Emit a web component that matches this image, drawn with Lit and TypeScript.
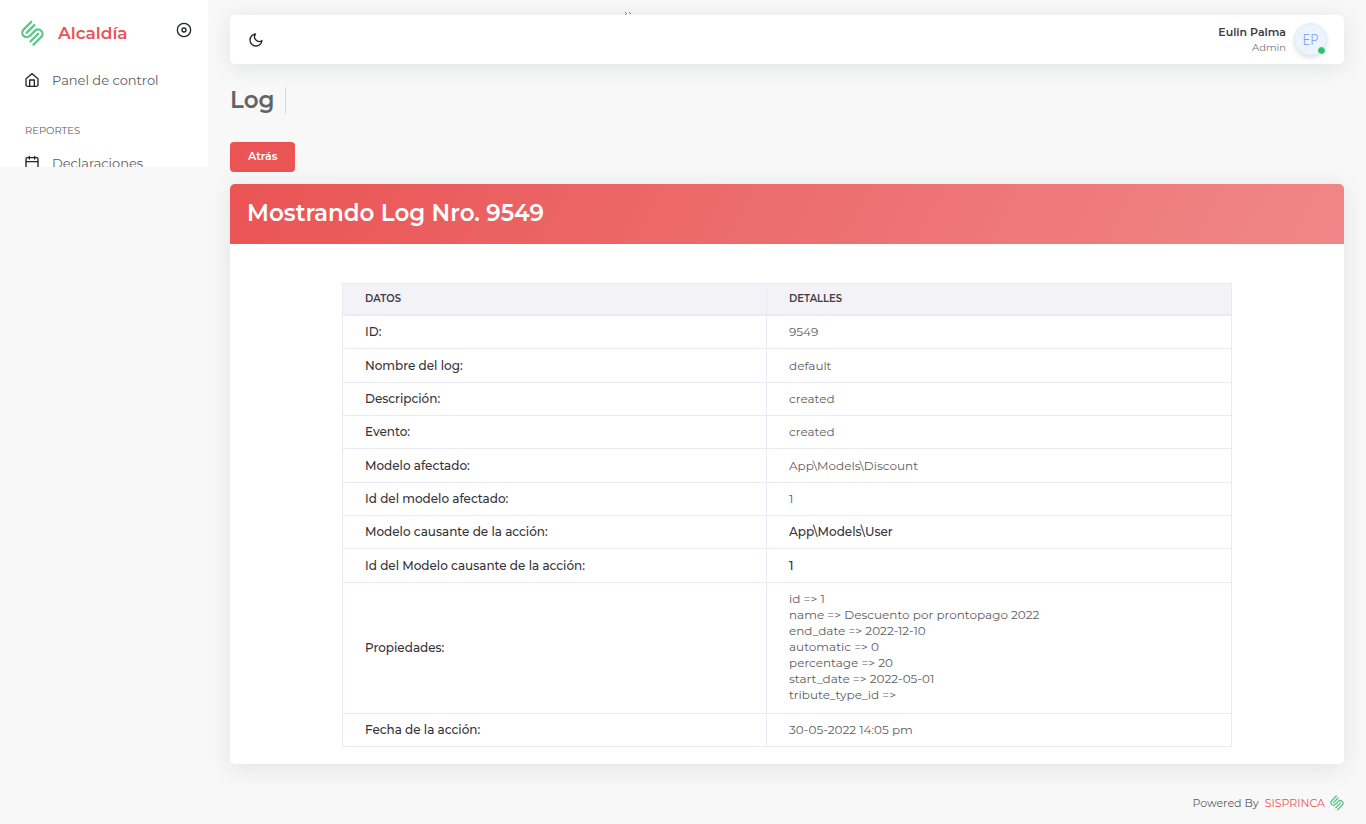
import { LitElement, html, css, svg } from "lit";
import { customElement } from "lit/decorators.js";

const logo = html`<svg class="logo" viewBox="0 0 24 28" fill="none" stroke="#62c48c" stroke-width="2.4" stroke-linecap="round" stroke-linejoin="round" aria-hidden="true">
  <path d="M10.8 1.9 2.650 10.050a4.600 4.600 0 0 0 6.500 6.500L14.650 11.050a4.600 4.600 0 0 1 6.500 6.500L13 25.700"/>
  <path d="M13.900 5.300 5.900 13.300"/>
  <path d="M17.900 14.300 9.900 22.300"/>
</svg>`;

const icon = (shape: unknown) => html`<svg class="icon" viewBox="0 0 24 24" fill="none" stroke="currentColor" stroke-width="2" stroke-linecap="round" stroke-linejoin="round" aria-hidden="true">${shape}</svg>`;

const home = svg`<path d="M3 10 12 2.500l9 7.500V19a2.500 2.500 0 0 1-2.500 2.500h-13A2.500 2.500 0 0 1 3 19z"/><path d="M8.500 21.500V12h7v9.500"/>`;
const calendar = svg`<rect x="3" y="4" width="18" height="18" rx="2"/><path d="M16 2v4M8 2v4M3 10h18"/>`;
const disc = svg`<circle cx="12" cy="12" r="10"/><circle cx="12" cy="12" r="3"/>`;
const moon = svg`<path d="M21 12.790A9 9 0 1 1 11.210 3 7 7 0 0 0 21 12.790z"/>`;

interface Row {
  label: string;
  lines: string[];
  strong?: boolean;
}

const rows: Row[] = [
  { label: "ID:", lines: ["9549"] },
  { label: "Nombre del log:", lines: ["default"] },
  { label: "Descripción:", lines: ["created"] },
  { label: "Evento:", lines: ["created"] },
  { label: "Modelo afectado:", lines: ["App\\Models\\Discount"] },
  { label: "Id del modelo afectado:", lines: ["1"] },
  { label: "Modelo causante de la acción:", lines: ["App\\Models\\User"], strong: true },
  { label: "Id del Modelo causante de la acción:", lines: ["1"], strong: true },
  {
    label: "Propiedades:",
    lines: [
      "id => 1",
      "name => Descuento por prontopago 2022",
      "end_date => 2022-12-10",
      "automatic => 0",
      "percentage => 20",
      "start_date => 2022-05-01",
      "tribute_type_id =>",
    ],
  },
  { label: "Fecha de la acción:", lines: ["30-05-2022 14:05 pm"] },
];

@customElement("app-root")
export class AppRoot extends LitElement {
  static styles = css`
    :host {
      display: flex;
      align-items: flex-start;
      min-height: 100vh;
      background: #f8f8f8;
      color: #5e5c62;
      font-family: Montserrat, Inter, sans-serif;
      font-size: 12px;
      line-height: 16px;
    }
    * { box-sizing: border-box; }
    a { color: inherit; text-decoration: none; }
    button { font: inherit; color: inherit; border: 0; background: none; padding: 0; cursor: pointer; }
    svg { display: block; flex: none; }
    .icon { width: 16px; height: 16px; color: #22252b; }
    .sidebar {
      flex: none;
      width: 208px;
      height: 167px;
      overflow: hidden;
      background: #fff;
    }
    .brand-row { display: flex; align-items: flex-start; padding: 20px 16px 0 20px; }
    .brand { display: flex; align-items: center; gap: 13px; flex: 1; color: #ea5455; font-size: 17px; line-height: 27px; font-weight: 600; }
    .logo { width: 25px; height: 27px; }
    .pin { padding-top: 2px; }
    .nav { display: flex; flex-direction: column; padding: 20px 24px 0; }
    .nav-link { display: flex; align-items: center; gap: 12px; height: 26px; font-size: 13px; }
    .section { margin: 0; padding: 31px 1px 12px; font-size: 10px; line-height: 14px; font-weight: 400; text-transform: uppercase; }
    .page { flex: 1; min-width: 0; min-height: 100vh; display: flex; flex-direction: column; padding: 15px 22px 0; }
    .topbar {
      position: relative;
      display: flex;
      align-items: center;
      justify-content: space-between;
      height: 49px;
      padding: 0 17px 0 18px;
      border-radius: 5px;
      background: #fff;
      box-shadow: 0 4px 22px rgba(34, 41, 47, 0.1);
    }
    .marks { position: absolute; top: -3px; left: 395px; width: 8px; height: 4px; }
    .user { display: flex; align-items: center; gap: 8px; text-align: right; color: #3f3c44; }
    .name { display: block; font-size: 11px; font-weight: 600; }
    .role { display: block; font-size: 10px; color: #77757f; }
    .avatar {
      position: relative;
      display: grid;
      place-items: center;
      width: 33px;
      height: 33px;
      border: 1px solid #e3ebf5;
      border-radius: 50%;
      background: #ebf4ff;
      color: #7f9cf5;
      font: 14px/16px "Noto Sans", sans-serif;
      font-weight: 300;
      box-shadow: 0 2px 4px rgba(34, 41, 47, 0.14);
    }
    .status { position: absolute; right: 0; bottom: 0; width: 9px; height: 9px; border: 1px solid #fff; border-radius: 50%; background: #28c76f; }
    .heading { display: flex; padding: 23px 0 28px; }
    .title { margin: 0; padding-right: 11px; border-right: 1px solid #d6dce1; color: #636363; font-size: 23px; line-height: 27px; font-weight: 600; }
    .back { align-self: flex-start; height: 30px; padding: 0 18px 2px; border-radius: 4px; background: #ea5455; color: #fff; font-size: 11px; font-weight: 600; }
    .card { margin-top: 12px; border-radius: 5px; overflow: hidden; background: #fff; box-shadow: 0 4px 24px rgba(34, 41, 47, 0.1); }
    .card-head { padding: 15px 17px 17px; background: linear-gradient(118deg, #ea5455, rgba(234, 84, 85, 0.7)); }
    .card-title { margin: 0; color: #fff; font-size: 23px; line-height: 28px; font-weight: 600; }
    .card-body { padding: 39px 112px 17px; }
    .data { width: 100%; border-collapse: collapse; table-layout: fixed; }
    .data th, .data td { padding: 8px 22px; border: 1px solid #ebe9f1; text-align: left; vertical-align: middle; }
    .data thead th { padding: 7px 22px 8px; border-bottom-width: 2px; background: #f3f2f7; color: #3f3c44; font-size: 10px; line-height: 15px; font-weight: 600; }
    .label-col { width: 424px; }
    .data tbody th, .data .strong { color: #35323a; font-weight: 500; }
    .data tbody tr:nth-child(3n + 2) { height: 34px; }
    .data .multi td { padding-bottom: 10px; }
    .line { display: block; }
    .footer { display: flex; align-items: center; justify-content: flex-end; gap: 6px; padding: 31px 0 12px; font-size: 11px; }
    .footer-link { display: flex; align-items: center; gap: 5px; color: #ea5455; }
    .footer .logo { width: 14px; height: 16px; }
  `;

  render() {
    return html`
      <aside class="sidebar">
        <div class="brand-row">
          <a class="brand" href="#">${logo}<span>Alcaldía</span></a>
          <button class="pin" aria-label="Fijar menú">${icon(disc)}</button>
        </div>
        <nav class="nav">
          <a class="nav-link" href="#">${icon(home)}<span>Panel de control</span></a>
          <h2 class="section">Reportes</h2>
          <a class="nav-link" href="#">${icon(calendar)}<span>Declaraciones</span></a>
        </nav>
      </aside>
      <main class="page">
        <header class="topbar">
          <svg class="marks" viewBox="0 0 8 4" aria-hidden="true">
            <path fill="#ea5455" d="M0 0h1v1H0zM1 1h1v1H1zM0 2h1v1H0zM4 0h1v1H4zM5 1h1v1H5z"/>
          </svg>
          <button aria-label="Modo oscuro">${icon(moon)}</button>
          <a class="user" href="#">
            <span><span class="name">Eulin Palma</span><span class="role">Admin</span></span>
            <span class="avatar">EP<span class="status"></span></span>
          </a>
        </header>
        <div class="heading"><h1 class="title">Log</h1></div>
        <button class="back">Atrás</button>
        <section class="card">
          <div class="card-head"><h2 class="card-title">Mostrando Log Nro. 9549</h2></div>
          <div class="card-body">
            <table class="data">
              <colgroup><col class="label-col" /><col /></colgroup>
              <thead><tr><th scope="col">DATOS</th><th scope="col">DETALLES</th></tr></thead>
              <tbody>
                ${rows.map((r) => html`<tr class=${r.lines.length > 1 ? "multi" : ""}>
                  <th scope="row">${r.label}</th>
                  <td class=${r.strong ? "strong" : ""}>${r.lines.map((l) => html`<span class="line">${l}</span>`)}</td>
                </tr>`)}
              </tbody>
            </table>
          </div>
        </section>
        <footer class="footer">
          <span>Powered By</span>
          <a class="footer-link" href="#">SISPRINCA ${logo}</a>
        </footer>
      </main>
    `;
  }
}
